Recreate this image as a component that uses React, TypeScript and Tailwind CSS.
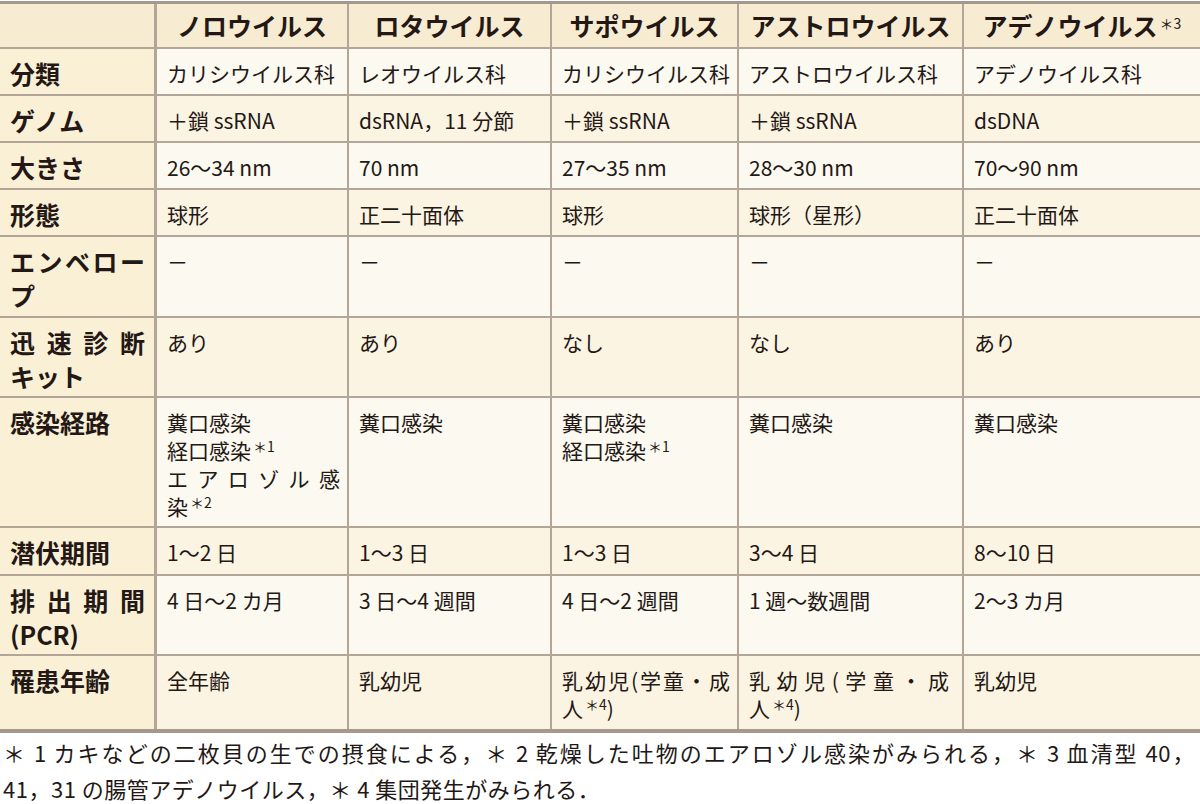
import type { ReactNode } from "react"

// Virus comparison table

const GRID = "grid grid-cols-[157px_192px_203px_187px_225px_236px]"
const LINE = "border-[#b3a699]"

const Sup = ({ children }: { children: ReactNode }) => (
  <sup className="ml-[2px] text-[14px] font-normal">{children}</sup>
)

// one justified line (distributed across cell width)
const J = ({ children, wide }: { children: ReactNode; wide?: boolean }) => (
  <span className={`block [text-align-last:justify] ${wide ? "mr-[9px]" : "mr-[3px]"}`}>{children}</span>
)
const L = ({ children }: { children: ReactNode }) => <span className="block">{children}</span>

const headers: ReactNode[] = [
  "ノロウイルス",
  "ロタウイルス",
  "サポウイルス",
  "アストロウイルス",
  <>
    アデノウイルス<Sup>＊3</Sup>
  </>,
]

interface Row {
  label: ReactNode
  h: string
  cream: boolean
  cells: ReactNode[]
}

const rows: Row[] = [
  {
    label: "分類",
    h: "h-[47px]",
    cream: false,
    cells: ["カリシウイルス科", "レオウイルス科", "カリシウイルス科", "アストロウイルス科", "アデノウイルス科"],
  },
  {
    label: "ゲノム",
    h: "h-[47px]",
    cream: true,
    cells: ["＋鎖 ssRNA", "dsRNA，11 分節", "＋鎖 ssRNA", "＋鎖 ssRNA", "dsDNA"],
  },
  {
    label: "大きさ",
    h: "h-[47px]",
    cream: false,
    cells: ["26～34 nm", "70 nm", "27～35 nm", "28～30 nm", "70～90 nm"],
  },
  {
    label: "形態",
    h: "h-[47px]",
    cream: true,
    cells: ["球形", "正二十面体", "球形", "球形（星形）", "正二十面体"],
  },
  {
    label: (
      <>
        <J>エンベロー</J>
        <L>プ</L>
      </>
    ),
    h: "h-[81px]",
    cream: false,
    cells: ["－", "－", "－", "－", "－"],
  },
  {
    label: (
      <>
        <J>迅速診断</J>
        <L>キット</L>
      </>
    ),
    h: "h-[80px]",
    cream: true,
    cells: ["あり", "あり", "なし", "なし", "あり"],
  },
  {
    label: "感染経路",
    h: "h-[130px]",
    cream: false,
    cells: [
      <>
        <L>糞口感染</L>
        <L>
          経口感染<Sup>＊1</Sup>
        </L>
        <J>エアロゾル感</J>
        <L>
          染<Sup>＊2</Sup>
        </L>
      </>,
      "糞口感染",
      <>
        <L>糞口感染</L>
        <L>
          経口感染<Sup>＊1</Sup>
        </L>
      </>,
      "糞口感染",
      "糞口感染",
    ],
  },
  {
    label: "潜伏期間",
    h: "h-[48px]",
    cream: true,
    cells: ["1～2 日", "1～3 日", "1～3 日", "3～4 日", "8～10 日"],
  },
  {
    label: (
      <>
        <J>排出期間</J>
        <L>(PCR)</L>
      </>
    ),
    h: "h-[80px]",
    cream: false,
    cells: ["4 日～2 カ月", "3 日～4 週間", "4 日～2 週間", "1 週～数週間", "2～3 カ月"],
  },
  {
    label: "罹患年齢",
    h: "h-[73px]",
    cream: true,
    cells: [
      "全年齢",
      "乳幼児",
      <>
        <J>乳幼児(学童・成</J>
        <L>
          人<Sup>＊4</Sup>)
        </L>
      </>,
      <>
        <J wide>乳幼児(学童・成</J>
        <L>
          人<Sup>＊4</Sup>)
        </L>
      </>,
      "乳幼児",
    ],
  },
]

export default function App() {
  return (
    <div className="w-[1200px] h-[804px] bg-white text-[#231815] font-['Noto_Sans_CJK_JP',sans-serif] overflow-hidden">
      <div className="mt-[1px] border-t-[3px] border-b-4 border-[#a6988c]">
        {/* header */}
        <div className={`${GRID} h-[45px] bg-[#f7ebd1]`}>
          <div className={`border-r-[3px] border-b-2 ${LINE}`} />
          {headers.map((h, i) => (
            <div
              key={i}
              className={`flex items-center justify-center border-b-2 ${LINE} ${i < 4 ? "border-r-2" : ""} text-[25px] font-bold leading-none`}
            >
              <span>{h}</span>
            </div>
          ))}
        </div>

        {rows.map((row, r) => {
          const last = r === rows.length - 1
          return (
            <div key={r} className={`${GRID} ${row.h}`}>
              <div
                className={`bg-[#faf0d6] border-r-[3px] ${last ? "" : "border-b-2"} ${LINE} pl-[10px] pr-[6px] pt-[7px] text-[25px] font-bold leading-[34px]`}
              >
                {row.label}
              </div>
              {row.cells.map((c, i) => (
                <div
                  key={i}
                  className={`${row.cream ? "bg-[#fbf4e2]" : "bg-[#fcf9f1]"} ${i < 4 ? "border-r-2" : ""} ${last ? "" : "border-b-2"} ${LINE} pl-[10px] pr-[4px] pt-[10px] text-[21px] leading-[28px] whitespace-nowrap`}
                >
                  {c}
                </div>
              ))}
            </div>
          )
        })}
      </div>

      {/* footnotes */}
      <div className="pl-[3px] pr-[2px] pt-[1px] text-[22px] leading-[36px] tracking-[0.5px]">
        <J>＊ 1 カキなどの二枚貝の生での摂食による，＊ 2 乾燥した吐物のエアロゾル感染がみられる，＊ 3 血清型 40，</J>
        <L>41，31 の腸管アデノウイルス，＊ 4 集団発生がみられる．</L>
      </div>
    </div>
  )
}
